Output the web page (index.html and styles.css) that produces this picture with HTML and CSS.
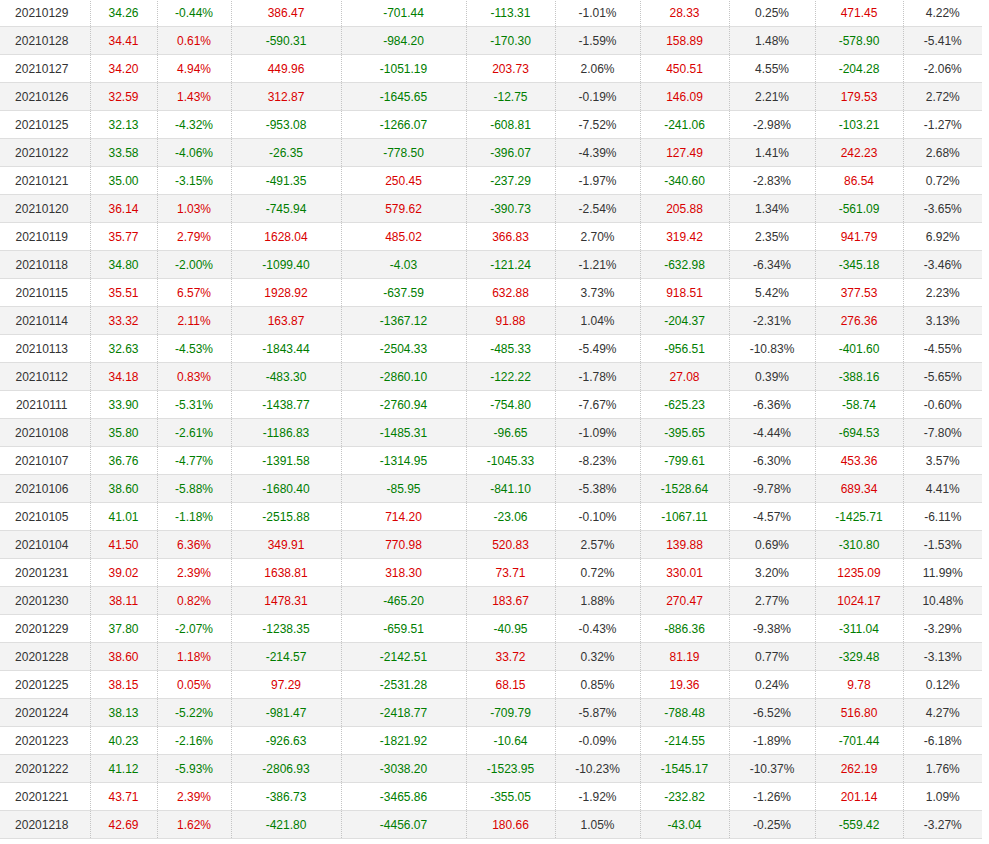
FILE: index.html
```html
<!DOCTYPE html>
<html lang="zh">
<head>
<meta charset="utf-8">
<title>资金流向</title>
<link rel="stylesheet" href="styles.css">
</head>
<body>
<table class="flow">
<colgroup>
<col class="c1"><col class="c2"><col class="c3"><col class="c4"><col class="c5"><col class="c6"><col class="c7"><col class="c8"><col class="c9"><col class="c10"><col class="c11">
</colgroup>
<tbody>
<tr><td>20210129</td><td class="g">34.26</td><td class="g">-0.44%</td><td class="r">386.47</td><td class="g">-701.44</td><td class="g">-113.31</td><td>-1.01%</td><td class="r">28.33</td><td>0.25%</td><td class="r">471.45</td><td>4.22%</td></tr>
<tr><td>20210128</td><td class="r">34.41</td><td class="r">0.61%</td><td class="g">-590.31</td><td class="g">-984.20</td><td class="g">-170.30</td><td>-1.59%</td><td class="r">158.89</td><td>1.48%</td><td class="g">-578.90</td><td>-5.41%</td></tr>
<tr><td>20210127</td><td class="r">34.20</td><td class="r">4.94%</td><td class="r">449.96</td><td class="g">-1051.19</td><td class="r">203.73</td><td>2.06%</td><td class="r">450.51</td><td>4.55%</td><td class="g">-204.28</td><td>-2.06%</td></tr>
<tr><td>20210126</td><td class="r">32.59</td><td class="r">1.43%</td><td class="r">312.87</td><td class="g">-1645.65</td><td class="g">-12.75</td><td>-0.19%</td><td class="r">146.09</td><td>2.21%</td><td class="r">179.53</td><td>2.72%</td></tr>
<tr><td>20210125</td><td class="g">32.13</td><td class="g">-4.32%</td><td class="g">-953.08</td><td class="g">-1266.07</td><td class="g">-608.81</td><td>-7.52%</td><td class="g">-241.06</td><td>-2.98%</td><td class="g">-103.21</td><td>-1.27%</td></tr>
<tr><td>20210122</td><td class="g">33.58</td><td class="g">-4.06%</td><td class="g">-26.35</td><td class="g">-778.50</td><td class="g">-396.07</td><td>-4.39%</td><td class="r">127.49</td><td>1.41%</td><td class="r">242.23</td><td>2.68%</td></tr>
<tr><td>20210121</td><td class="g">35.00</td><td class="g">-3.15%</td><td class="g">-491.35</td><td class="r">250.45</td><td class="g">-237.29</td><td>-1.97%</td><td class="g">-340.60</td><td>-2.83%</td><td class="r">86.54</td><td>0.72%</td></tr>
<tr><td>20210120</td><td class="r">36.14</td><td class="r">1.03%</td><td class="g">-745.94</td><td class="r">579.62</td><td class="g">-390.73</td><td>-2.54%</td><td class="r">205.88</td><td>1.34%</td><td class="g">-561.09</td><td>-3.65%</td></tr>
<tr><td>20210119</td><td class="r">35.77</td><td class="r">2.79%</td><td class="r">1628.04</td><td class="r">485.02</td><td class="r">366.83</td><td>2.70%</td><td class="r">319.42</td><td>2.35%</td><td class="r">941.79</td><td>6.92%</td></tr>
<tr><td>20210118</td><td class="g">34.80</td><td class="g">-2.00%</td><td class="g">-1099.40</td><td class="g">-4.03</td><td class="g">-121.24</td><td>-1.21%</td><td class="g">-632.98</td><td>-6.34%</td><td class="g">-345.18</td><td>-3.46%</td></tr>
<tr><td>20210115</td><td class="r">35.51</td><td class="r">6.57%</td><td class="r">1928.92</td><td class="g">-637.59</td><td class="r">632.88</td><td>3.73%</td><td class="r">918.51</td><td>5.42%</td><td class="r">377.53</td><td>2.23%</td></tr>
<tr><td>20210114</td><td class="r">33.32</td><td class="r">2.11%</td><td class="r">163.87</td><td class="g">-1367.12</td><td class="r">91.88</td><td>1.04%</td><td class="g">-204.37</td><td>-2.31%</td><td class="r">276.36</td><td>3.13%</td></tr>
<tr><td>20210113</td><td class="g">32.63</td><td class="g">-4.53%</td><td class="g">-1843.44</td><td class="g">-2504.33</td><td class="g">-485.33</td><td>-5.49%</td><td class="g">-956.51</td><td>-10.83%</td><td class="g">-401.60</td><td>-4.55%</td></tr>
<tr><td>20210112</td><td class="r">34.18</td><td class="r">0.83%</td><td class="g">-483.30</td><td class="g">-2860.10</td><td class="g">-122.22</td><td>-1.78%</td><td class="r">27.08</td><td>0.39%</td><td class="g">-388.16</td><td>-5.65%</td></tr>
<tr><td>20210111</td><td class="g">33.90</td><td class="g">-5.31%</td><td class="g">-1438.77</td><td class="g">-2760.94</td><td class="g">-754.80</td><td>-7.67%</td><td class="g">-625.23</td><td>-6.36%</td><td class="g">-58.74</td><td>-0.60%</td></tr>
<tr><td>20210108</td><td class="g">35.80</td><td class="g">-2.61%</td><td class="g">-1186.83</td><td class="g">-1485.31</td><td class="g">-96.65</td><td>-1.09%</td><td class="g">-395.65</td><td>-4.44%</td><td class="g">-694.53</td><td>-7.80%</td></tr>
<tr><td>20210107</td><td class="g">36.76</td><td class="g">-4.77%</td><td class="g">-1391.58</td><td class="g">-1314.95</td><td class="g">-1045.33</td><td>-8.23%</td><td class="g">-799.61</td><td>-6.30%</td><td class="r">453.36</td><td>3.57%</td></tr>
<tr><td>20210106</td><td class="g">38.60</td><td class="g">-5.88%</td><td class="g">-1680.40</td><td class="g">-85.95</td><td class="g">-841.10</td><td>-5.38%</td><td class="g">-1528.64</td><td>-9.78%</td><td class="r">689.34</td><td>4.41%</td></tr>
<tr><td>20210105</td><td class="g">41.01</td><td class="g">-1.18%</td><td class="g">-2515.88</td><td class="r">714.20</td><td class="g">-23.06</td><td>-0.10%</td><td class="g">-1067.11</td><td>-4.57%</td><td class="g">-1425.71</td><td>-6.11%</td></tr>
<tr><td>20210104</td><td class="r">41.50</td><td class="r">6.36%</td><td class="r">349.91</td><td class="r">770.98</td><td class="r">520.83</td><td>2.57%</td><td class="r">139.88</td><td>0.69%</td><td class="g">-310.80</td><td>-1.53%</td></tr>
<tr><td>20201231</td><td class="r">39.02</td><td class="r">2.39%</td><td class="r">1638.81</td><td class="r">318.30</td><td class="r">73.71</td><td>0.72%</td><td class="r">330.01</td><td>3.20%</td><td class="r">1235.09</td><td>11.99%</td></tr>
<tr><td>20201230</td><td class="r">38.11</td><td class="r">0.82%</td><td class="r">1478.31</td><td class="g">-465.20</td><td class="r">183.67</td><td>1.88%</td><td class="r">270.47</td><td>2.77%</td><td class="r">1024.17</td><td>10.48%</td></tr>
<tr><td>20201229</td><td class="g">37.80</td><td class="g">-2.07%</td><td class="g">-1238.35</td><td class="g">-659.51</td><td class="g">-40.95</td><td>-0.43%</td><td class="g">-886.36</td><td>-9.38%</td><td class="g">-311.04</td><td>-3.29%</td></tr>
<tr><td>20201228</td><td class="r">38.60</td><td class="r">1.18%</td><td class="g">-214.57</td><td class="g">-2142.51</td><td class="r">33.72</td><td>0.32%</td><td class="r">81.19</td><td>0.77%</td><td class="g">-329.48</td><td>-3.13%</td></tr>
<tr><td>20201225</td><td class="r">38.15</td><td class="r">0.05%</td><td class="r">97.29</td><td class="g">-2531.28</td><td class="r">68.15</td><td>0.85%</td><td class="r">19.36</td><td>0.24%</td><td class="r">9.78</td><td>0.12%</td></tr>
<tr><td>20201224</td><td class="g">38.13</td><td class="g">-5.22%</td><td class="g">-981.47</td><td class="g">-2418.77</td><td class="g">-709.79</td><td>-5.87%</td><td class="g">-788.48</td><td>-6.52%</td><td class="r">516.80</td><td>4.27%</td></tr>
<tr><td>20201223</td><td class="g">40.23</td><td class="g">-2.16%</td><td class="g">-926.63</td><td class="g">-1821.92</td><td class="g">-10.64</td><td>-0.09%</td><td class="g">-214.55</td><td>-1.89%</td><td class="g">-701.44</td><td>-6.18%</td></tr>
<tr><td>20201222</td><td class="g">41.12</td><td class="g">-5.93%</td><td class="g">-2806.93</td><td class="g">-3038.20</td><td class="g">-1523.95</td><td>-10.23%</td><td class="g">-1545.17</td><td>-10.37%</td><td class="r">262.19</td><td>1.76%</td></tr>
<tr><td>20201221</td><td class="r">43.71</td><td class="r">2.39%</td><td class="g">-386.73</td><td class="g">-3465.86</td><td class="g">-355.05</td><td>-1.92%</td><td class="g">-232.82</td><td>-1.26%</td><td class="r">201.14</td><td>1.09%</td></tr>
<tr><td>20201218</td><td class="r">42.69</td><td class="r">1.62%</td><td class="g">-421.80</td><td class="g">-4456.07</td><td class="r">180.66</td><td>1.05%</td><td class="g">-43.04</td><td>-0.25%</td><td class="g">-559.42</td><td>-3.27%</td></tr>
</tbody>
</table>
</body>
</html>
```

FILE: styles.css
```css
html, body {
  margin: 0;
  padding: 0;
  background: #fff;
  overflow: hidden;
}

.flow {
  border-collapse: collapse;
  table-layout: fixed;
  width: 988px;
  margin: -1px 0 0 -6px;
  font-family: "Liberation Sans", Arial, sans-serif;
  font-size: 12px;
  color: #333;
}

.c1 { width: 96px; }
.c2 { width: 67px; }
.c3 { width: 74px; }
.c4 { width: 110px; }
.c5 { width: 125px; }
.c6 { width: 89px; }
.c7 { width: 85px; }
.c8 { width: 89px; }
.c9 { width: 86px; }
.c10 { width: 88px; }
.c11 { width: 79px; }

.flow td {
  height: 27px;
  padding: 0;
  text-align: center;
  vertical-align: middle;
  border-bottom: 1px solid #dedede;
  border-left: 1px dotted #c4c4c4;
  white-space: nowrap;
}

.flow td:first-child {
  border-left: none;
}

.flow tr:nth-child(even) td {
  background: #f3f3f3;
}

.flow .r { color: #d90000; }
.flow .g { color: #007d00; }
```
